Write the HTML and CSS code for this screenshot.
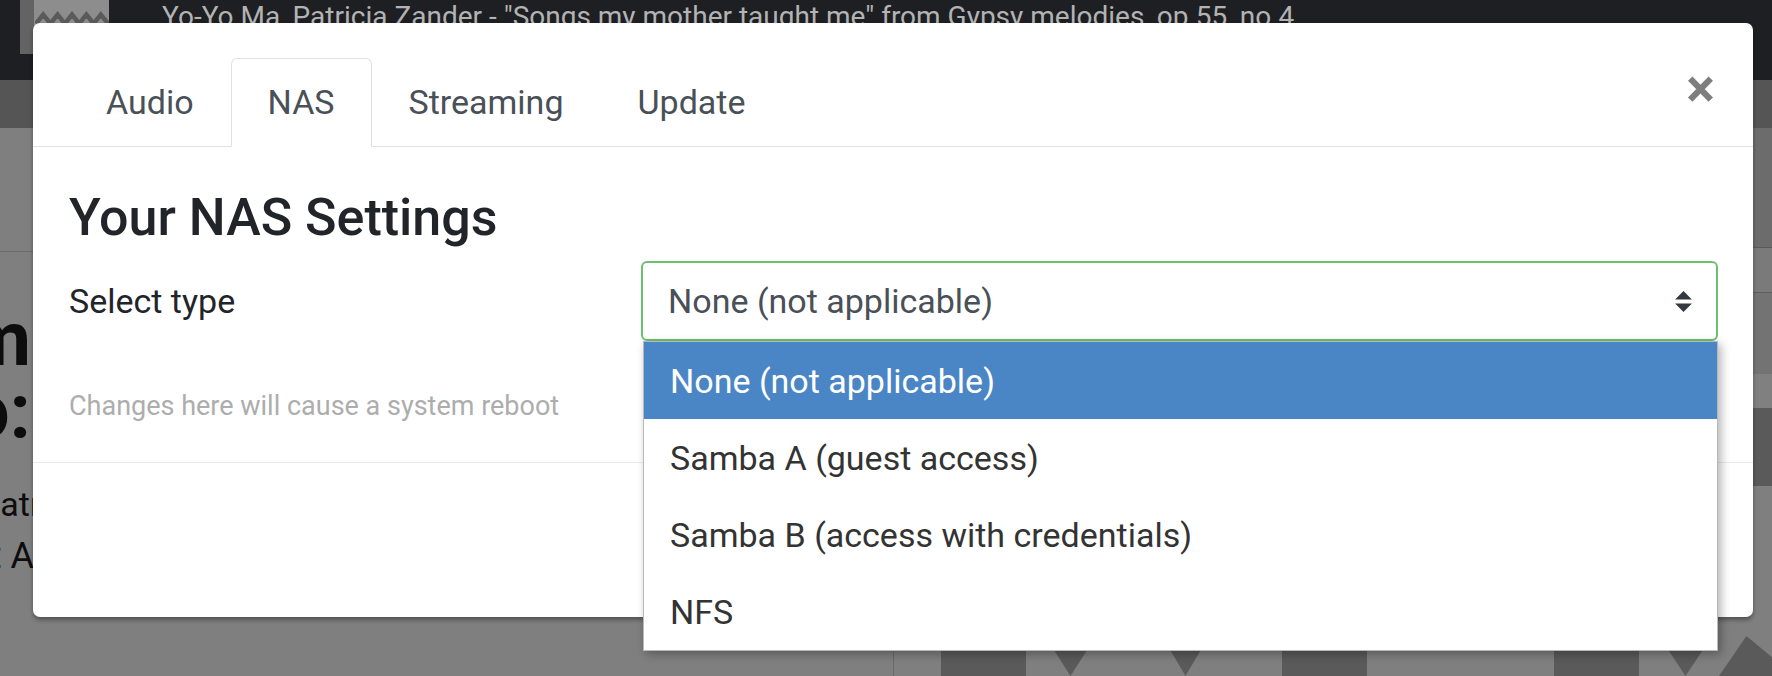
FILE: index.html
```html
<!DOCTYPE html>
<html lang="en">
<head>
<meta charset="utf-8">
<title>NAS Settings</title>
<link rel="stylesheet" href="styles.css">
</head>
<body>
<div class="page">
  <header class="player">
    <div class="thumb">
      <svg class="thumb-art" viewBox="0 0 80 20" width="74" height="18"><polyline points="0,14 8,4 16,14 24,4 32,14 40,4 48,14 56,4 64,14 72,4 80,14" fill="none" stroke="#5a5a5a" stroke-width="5"/></svg>
    </div>
    <div class="track">Yo-Yo Ma, Patricia Zander - "Songs my mother taught me" from Gypsy melodies, op.55, no.4</div>
  </header>
  <div class="subnav"></div>
  <div class="main">
    <section class="left">
      <div class="l-rule"></div>
      <div class="l-big">Album</div>
      <div class="l-big2">Info:</div>
      <div class="l-text l-artist">Patricia Zander</div>
      <div class="l-text l-studio">Recorded at Abbey Road</div>
    </section>
    <div class="spacer"></div>
    <section class="right">
      <div class="rb rb1"></div>
      <div class="rb rb2"></div>
      <div class="rb rb3"></div>
      <div class="rb rb4"></div>
      <div class="rb rb5"></div>
      <div class="rb rb6"></div>
    </section>
  </div>
  <div class="covers">
    <div class="cv cv-line"></div>
    <div class="cv cv-dark"></div>
    <div class="cv cv-s19"></div>
    <div class="cv cv-tri cv-tri1"></div>
    <div class="cv cv-s66"></div>
    <div class="cv cv-tri cv-tri2"></div>
    <div class="cv cv-s73"></div>
    <div class="cv cv-dark"></div>
    <div class="cv cv-s187"></div>
    <div class="cv cv-dark"></div>
    <div class="cv cv-s20"></div>
    <div class="cv cv-tri cv-tri3"></div>
    <div class="cv cv-diag"></div>
  </div>
</div>

<div class="modal">
  <div class="modal-header">
    <nav class="tabs">
      <div class="tab">Audio</div>
      <div class="tab active">NAS</div>
      <div class="tab">Streaming</div>
      <div class="tab">Update</div>
    </nav>
    <div class="close">×</div>
  </div>
  <div class="modal-body">
    <h4 class="title">Your NAS Settings</h4>
    <div class="form-row">
      <label class="label">Select type</label>
      <div class="select">
        <span>None (not applicable)</span>
        <svg class="arrows" viewBox="0 0 4 5" width="17" height="21"><path d="M2 0L0 2h4zm0 5L0 3h4z" fill="#343a40"/></svg>
      </div>
    </div>
    <small class="hint">Changes here will cause a system reboot</small>
  </div>
  <div class="modal-footer"></div>
</div>

<div class="dropdown">
  <div class="option selected">None (not applicable)</div>
  <div class="option">Samba A (guest access)</div>
  <div class="option">Samba B (access with credentials)</div>
  <div class="option">NFS</div>
</div>
</body>
</html>
```

FILE: styles.css
```css
* { box-sizing: border-box; }
html, body { margin: 0; padding: 0; }
body {
  width: 1772px;
  height: 676px;
  overflow: hidden;
  background: #7f7f7f;
  font-family: Roboto, "Liberation Sans", sans-serif;
  position: relative;
}

/* ---------- page behind the backdrop ---------- */
.page {
  display: flex;
  flex-direction: column;
  height: 676px;
}
.player {
  height: 80px;
  flex: none;
  background: #1d1f23;
  display: flex;
  align-items: flex-start;
}
.thumb {
  width: 89px;
  height: 62px;
  margin: -8px 0 0 20px;
  background: #8d8d8d;
  border-left: 14px solid #636363;
  display: flex;
  justify-content: center;
  padding-top: 19px;
}
.thumb-art { display: block; }
.track {
  margin-left: 53px;
  padding-top: 3px;
  font-size: 28px;
  line-height: 28px;
  color: #b3b3b3;
  white-space: nowrap;
}
.subnav {
  height: 48px;
  flex: none;
  background: #555;
}
.main {
  flex: 1;
  display: flex;
}
.left {
  width: 40px;
  flex: none;
  padding-top: 123px;
  color: #0d0d0d;
}
.l-rule {
  height: 1px;
  width: 33px;
  background: #6a6a6a;
  margin-bottom: 51px;
}
.l-big, .l-big2 {
  display: flex;
  justify-content: flex-end;
  width: 31px;
  white-space: nowrap;
  font-size: 76px;
  font-weight: 700;
  line-height: 72px;
}
.l-text {
  white-space: nowrap;
  font-size: 34px;
  line-height: 52px;
}
.l-artist { margin-left: -21px; margin-top: 31px; }
.l-studio { margin-left: -191px; font-size: 36px; }
.spacer { flex: 1; }
.right {
  width: 60px;
  flex: none;
  display: flex;
  flex-direction: column;
}
.rb { flex: none; }
.rb1 { height: 120px; background: #6c6c6c; border-bottom: 1px solid #5a5a5a; }
.rb2 { height: 45px; background: #7a7a7a; border-bottom: 1px solid #5e5e5e; }
.rb3 { height: 81px; background: #737373; }
.rb4 { height: 34px; background: #808080; }
.rb5 { height: 78px; background: #5a5a5a; }
.rb6 { flex: 1; background: #7f7f7f; }

.covers {
  height: 40px;
  flex: none;
  display: flex;
  padding-left: 893px;
}
.cv { flex: none; height: 100%; }
.cv-line { width: 48px; border-left: 1px solid #6a6a6a; }
.cv-dark { width: 85px; background: #5a5a5a; }
.cv-s19 { width: 19px; }
.cv-s66 { width: 66px; }
.cv-s73 { width: 73px; }
.cv-s187 { width: 187px; }
.cv-s20 { width: 20px; }
.cv-tri { background: #5a5a5a; clip-path: polygon(0 0, 100% 0, 50% 100%); }
.cv-tri1 { width: 51px; }
.cv-tri2 { width: 47px; }
.cv-tri3 { width: 53px; }
.cv-diag {
  width: 61px;
  margin-left: 7px;
  background: #5a5a5a;
  clip-path: polygon(0 100%, 45% 0, 100% 70%, 100% 100%);
}

/* ---------- modal ---------- */
.modal {
  position: absolute;
  left: 33px;
  top: 23px;
  width: 1720px;
  height: 594px;
  background: #fff;
  border-radius: 7px;
  box-shadow: 0 3px 4px rgba(0, 0, 0, 0.35);
  display: flex;
  flex-direction: column;
  color: #212529;
}
.modal-header {
  display: flex;
  align-items: flex-start;
  padding: 35px 36px 0 36px;
  border-bottom: 1px solid #dee2e6;
}
.tabs {
  display: flex;
  margin-bottom: -1px;
}
.tab {
  padding: 18px 36px;
  font-size: 34px;
  line-height: 51px;
  color: #495057;
  border: 1px solid transparent;
  border-radius: 6px 6px 0 0;
}
.tab.active {
  border-color: #dee2e6 #dee2e6 #fff;
  background: #fff;
}
.close {
  margin-left: auto;
  margin-top: 4px;
  margin-right: 2px;
  font-size: 54px;
  font-weight: 700;
  line-height: 54px;
  color: #000;
  opacity: 0.5;
}
.modal-body {
  padding: 40px 35px 36px 36px;
  border-bottom: 1px solid #e9ecef;
}
.title {
  margin: 0 0 13px;
  font-size: 52px;
  font-weight: 500;
  line-height: 61px;
  color: #212529;
}
.form-row {
  display: grid;
  grid-template-columns: 572px 1fr;
  align-items: center;
}
.label {
  font-size: 34px;
  line-height: 51px;
  color: #212529;
}
.select {
  height: 80px;
  border: 2px solid #6cc070;
  border-radius: 6px;
  display: flex;
  align-items: center;
  padding: 0 24px 0 25px;
  font-size: 34px;
  color: #495057;
}
.arrows { margin-left: auto; display: block; }
.hint {
  display: block;
  margin-top: 45px;
  font-size: 27px;
  line-height: 40px;
  color: #adadad;
}
.modal-footer { flex: 1; }

/* ---------- native select popup ---------- */
.dropdown {
  position: absolute;
  left: 643px;
  top: 341px;
  width: 1075px;
  background: #fff;
  border: 1px solid #b9b9b9;
  box-shadow: 3px 3px 9px rgba(0, 0, 0, 0.3);
}
.option {
  height: 77px;
  display: flex;
  align-items: center;
  padding-left: 26px;
  font-size: 34px;
  color: #333;
}
.option.selected {
  background: #4a86c6;
  color: #fff;
}
```
